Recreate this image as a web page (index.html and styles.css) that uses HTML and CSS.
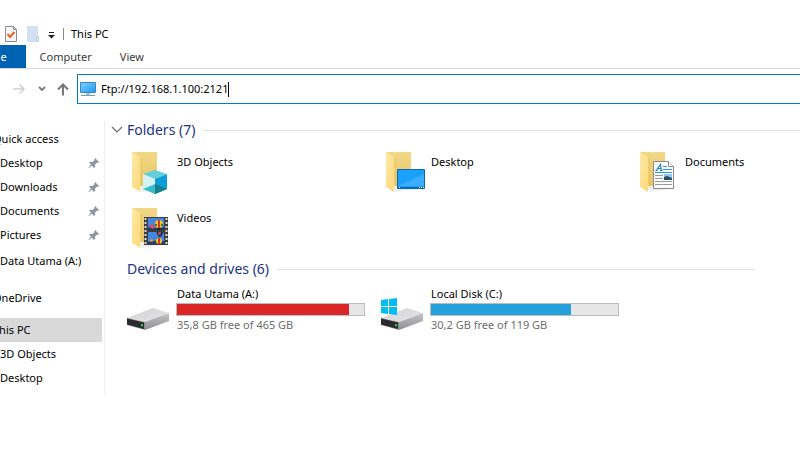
FILE: index.html
```
<!DOCTYPE html>
<html lang="en">
<head>
    <meta charset="UTF-8">
    <meta name="viewport" content="width=device-width, initial-scale=1.0">
    <title>This PC</title>
    <link rel="stylesheet" href="styles.css">
</head>
<body>
    <!-- Shared shapes -->
    <svg class="defs" aria-hidden="true">
        <defs>
            <linearGradient id="folderBack" x1="0" y1="0" x2="0" y2="1">
                <stop offset="0" stop-color="#f2d888"/>
                <stop offset="1" stop-color="#e8c562"/>
            </linearGradient>
            <linearGradient id="folderFront" x1="0" y1="0" x2="1" y2="1">
                <stop offset="0" stop-color="#ffe9a6"/>
                <stop offset="1" stop-color="#fcd978"/>
            </linearGradient>
            <linearGradient id="driveTop" x1="0" y1="0" x2="1" y2="1">
                <stop offset="0" stop-color="#d2d2d4"/>
                <stop offset="1" stop-color="#e6e6e8"/>
            </linearGradient>
            <linearGradient id="driveSide" x1="0" y1="0" x2="0" y2="1">
                <stop offset="0" stop-color="#c6c6c8"/>
                <stop offset="1" stop-color="#8e8e90"/>
            </linearGradient>
            <linearGradient id="screen" x1="0" y1="0" x2="1" y2="1">
                <stop offset="0" stop-color="#7fd0ff"/>
                <stop offset="1" stop-color="#1e9bf0"/>
            </linearGradient>
            <symbol id="folder" viewBox="0 0 48 48">
                <path d="M13 38h29l-4 3-24 3z" fill="#eeeeee"/>
                <path d="M5 4h25v34H12z" fill="url(#folderBack)"/>
                <path d="M5 4l9 6v27l-1 1v6L5 39z" fill="url(#folderFront)"/>
                <path d="M14 10v27" stroke="#e3bf5c" fill="none"/>
            </symbol>
            <symbol id="drive" viewBox="0 0 48 48">
                <path d="M0 31l26-10 16 5-24 9z" fill="url(#driveTop)"/>
                <path d="M18 35l24-9v8l-24 9z" fill="url(#driveSide)"/>
                <path d="M0 31l18 4v8L0 38z" fill="#8b8b8d"/>
                <path d="M0 31.500l17 4v6.500L0 37.500z" fill="#2b2b2d"/>
                <path d="M14 37l2 .5v2l-2-.5z" fill="#2fe04a"/>
            </symbol>
            <symbol id="pin" viewBox="0 0 12 12">
                <path d="M7 1l4 4-1 1-1-.4-2.300 2.400.3 2-1 1L3.800 8.700 1 11l-.5-.5L3 7.700 1.200 5.800l1-1 2.200.3L6.800 3 6.200 1.800z" fill="#8a97a3"/>
            </symbol>
        </defs>
    </svg>

    <div class="explorer">
        <header class="title-bar">
            <button class="tool" type="button" aria-label="Properties">
                <svg width="14" height="18" viewBox="0 0 14 18">
                    <path d="M1.500 1.500h8l3 3v12h-11z" fill="#f7f7f7" stroke="#8c8c8c"/>
                    <path d="M9.500 1.500v3h3" fill="none" stroke="#8c8c8c"/>
                    <path d="M3.500 9l2.500 3 4.500-5" fill="none" stroke="#e8622a" stroke-width="2"/>
                </svg>
            </button>
            <button class="tool" type="button" aria-label="New folder">
                <svg width="14" height="18" viewBox="0 0 14 18">
                    <path d="M1 1h11v10h1v6H1z" fill="#d3e0f1"/>
                    <path d="M10.500 11.500h2v5h-2z" fill="#e2eaf6" stroke="#bccde4"/>
                </svg>
            </button>
            <button class="tool" type="button" aria-label="Customize Quick Access Toolbar">
                <svg width="7" height="10" viewBox="0 0 7 10">
                    <path d="M1 3.500h5" stroke="#222222"/>
                    <path d="M0 6h7L3.500 9.500z" fill="#222222"/>
                </svg>
            </button>
            <h1 class="title">This PC</h1>
        </header>

        <nav class="tabs">
            <a class="tab tab-file" href="#file">File</a>
            <a class="tab" href="#computer">Computer</a>
            <a class="tab" href="#view">View</a>
        </nav>

        <div class="nav-row">
            <button class="nav-button" type="button" aria-label="Forward" disabled>
                <svg width="14" height="14" viewBox="0 0 14 14">
                    <path d="M1 7h11M7.500 2.500L12 7l-4.500 4.500" fill="none" stroke="#cfcfcf" stroke-width="1.500"/>
                </svg>
            </button>
            <button class="nav-button" type="button" aria-label="Recent locations">
                <svg width="8" height="14" viewBox="0 0 8 14">
                    <path d="M1 5l3 3 3-3" fill="none" stroke="#777777" stroke-width="1.800"/>
                </svg>
            </button>
            <button class="nav-button" type="button" aria-label="Up">
                <svg width="14" height="14" viewBox="0 0 14 14">
                    <path d="M7 13.500V2.500M2 7.500l5-5 5 5" fill="none" stroke="#777777" stroke-width="2"/>
                </svg>
            </button>
            <div class="address">
                <svg width="18" height="16" viewBox="0 0 18 16">
                    <path d="M1.500 1.500h15v10h-15z" fill="url(#screen)" stroke="#3c86b8"/>
                    <path d="M7 12h4v2H7z" fill="#9fc4d8"/>
                    <path d="M2 14.500h14" stroke="#6fa3bd"/>
                </svg>
                <input class="address-input" type="text" aria-label="Address" value="Ftp://192.168.1.100:2121" spellcheck="false">
                <span class="caret"></span>
            </div>
        </div>

        <div class="panes">
            <nav class="sidebar">
                <ul class="tree">
                    <li><a class="node root" href="#quick">Quick access</a></li>
                    <li><a class="node" href="#desktop">Desktop<svg class="pin"><use href="#pin"/></svg></a></li>
                    <li><a class="node" href="#downloads">Downloads<svg class="pin"><use href="#pin"/></svg></a></li>
                    <li><a class="node" href="#documents">Documents<svg class="pin"><use href="#pin"/></svg></a></li>
                    <li><a class="node" href="#pictures">Pictures<svg class="pin"><use href="#pin"/></svg></a></li>
                    <li class="drive-node"><a class="node" href="#a">Data Utama (A:)</a></li>
                    <li class="cloud-node"><a class="node root" href="#onedrive">OneDrive</a></li>
                    <li class="pc-node"><a class="node root active" href="#pc">This PC</a></li>
                    <li><a class="node" href="#3d">3D Objects</a></li>
                    <li><a class="node" href="#pc-desktop">Desktop</a></li>
                </ul>
            </nav>

            <main class="content">
                <section>
                    <h2 class="group">
                        <svg class="chevron" width="12" height="8" viewBox="0 0 12 8">
                            <path d="M1 1l5 5 5-5" fill="none" stroke="#6b6b6b" stroke-width="1.200"/>
                        </svg>
                        Folders (7)
                    </h2>
                    <div class="tiles">
                        <a class="tile" href="#3d">
                            <svg class="icon" viewBox="0 0 48 48">
                                <use href="#folder"/>
                                <path d="M16 26l12-4 12 4-12 5z" fill="#62cfdd"/>
                                <path d="M16 26l12 5v15l-12-5z" fill="#d5f3f5"/>
                                <path d="M28 31l12-5v15l-12 5z" fill="#0b9fd8"/>
                                <path d="M16 41l12-5v10z" fill="#3bbccb"/>
                                <path d="M28 36l12 5-12 5z" fill="#16808f"/>
                            </svg>
                            <span class="name">3D Objects</span>
                        </a>
                        <a class="tile" href="#desktop">
                            <svg class="icon" viewBox="0 0 48 48">
                                <use href="#folder"/>
                                <path d="M16.500 21.500h27v19h-27z" fill="#1ba1fb" stroke="#0a68b4"/>
                                <path d="M17 38l26-12v12z" fill="#3aaefc"/>
                                <path d="M17 39.500h26" stroke="#0a68b4"/>
                                <path d="M18 39.500h1M38 39.500h1M40 39.500h1M42 39.500h1" stroke="#ffffff"/>
                            </svg>
                            <span class="name">Desktop</span>
                        </a>
                        <a class="tile" href="#documents">
                            <svg class="icon" viewBox="0 0 48 48">
                                <use href="#folder"/>
                                <path d="M18.500 13.500h15l5 5v22h-20z" fill="#fafafa" stroke="#8a8a8a"/>
                                <path d="M33.500 13.500v5h5" fill="#ffffff" stroke="#8a8a8a"/>
                                <path d="M20.500 22.500h2M21.500 22l4-5.500.8 6M23 20.500h3.500M25 22.500h2.500" fill="none" stroke="#1585d0" stroke-width="1.200"/>
                                <path d="M28 18.500h4M28 21.500h9M20 24.500h17" stroke="#2b9be0"/>
                                <path d="M20 27.500h8M20 30.500h8M20 33.500h17M20 36.500h17" stroke="#9a9a9a"/>
                                <path d="M29 26h8v6h-8z" fill="#8fc7ee"/>
                                <path d="M29 29l3-1 5 2v2h-8z" fill="#2c4f66"/>
                            </svg>
                            <span class="name">Documents</span>
                        </a>
                        <a class="tile" href="#videos">
                            <svg class="icon" viewBox="0 0 48 48">
                                <use href="#folder"/>
                                <path d="M17 13h24v28H17z" fill="#3c3c3c"/>
                                <path d="M18.500 14v27M39.500 14v27" stroke="#d8d8d8" stroke-width="2" stroke-dasharray="2 2"/>
                                <path d="M21 14h16v12H21zM21 28h16v12H21z" fill="#4388e2"/>
                                <path d="M21 24l4-2 4 2 8-1v3H21zM21 38l5-2 5 2 6-1v3H21z" fill="#233d6b"/>
                                <path d="M22 22l3-2 4 3-4 2z" fill="#d94f6b"/>
                                <circle cx="32" cy="20" r="4" fill="#f3c51d"/>
                                <path d="M31 16h2v8h-2z" fill="#d8352a"/>
                                <path d="M28 20h2v2h-2zM34 20h2v2h-2z" fill="#2e7b35"/>
                                <path d="M30 24h4v2h-4z" fill="#2a2033"/>
                                <path d="M29 28h8l-3 5h-2z" fill="#26315e"/>
                                <path d="M31 28h3l-1 3h-1z" fill="#e0452e"/>
                                <circle cx="32" cy="37" r="3" fill="#f3c51d"/>
                                <path d="M31 34h2v6h-2z" fill="#d8352a"/>
                                <path d="M22 36l3-1 2 2-3 1z" fill="#e9a23b"/>
                            </svg>
                            <span class="name">Videos</span>
                        </a>
                    </div>
                </section>

                <section class="devices">
                    <h2 class="group">Devices and drives (6)</h2>
                    <div class="tiles">
                        <a class="tile" href="#a">
                            <svg class="icon" viewBox="0 0 48 48"><use href="#drive"/></svg>
                            <span class="drive-info">
                                <span class="drive-name" id="drive-a">Data Utama (A:)</span>
                                <progress class="usage full" aria-labelledby="drive-a" max="100" value="92"></progress>
                                <span class="space">35,8 GB free of 465 GB</span>
                            </span>
                        </a>
                        <a class="tile" href="#c">
                            <svg class="icon" viewBox="0 0 48 48">
                                <use href="#drive"/>
                                <path d="M0 13l7-1v7H0zM8 12l8-1v8H8zM0 20h7v7l-7-1zM8 20h8v8l-8-1z" fill="#00bcf2"/>
                            </svg>
                            <span class="drive-info">
                                <span class="drive-name" id="drive-c">Local Disk (C:)</span>
                                <progress class="usage" aria-labelledby="drive-c" max="100" value="75"></progress>
                                <span class="space">30,2 GB free of 119 GB</span>
                            </span>
                        </a>
                    </div>
                </section>
            </main>
        </div>
    </div>
</body>
</html>
```
FILE: styles.css
```
* {
    margin: 0;
    padding: 0;
    box-sizing: border-box;
}

body {
    font-family: 'Noto Sans', sans-serif;
    font-size: 11px;
    line-height: 16px;
    color: #000;
    background: #fff;
}

a {
    color: inherit;
    text-decoration: none;
}

button {
    display: flex;
    background: none;
    border: none;
}

ul {
    list-style: none;
}

.defs {
    display: block;
    width: 0;
    height: 0;
}

.explorer {
    padding-top: 22px;
    overflow: hidden;
}

/* Title bar */
.title-bar {
    display: flex;
    align-items: center;
    gap: 8px;
    height: 23px;
    padding-left: 4px;
}

.title {
    padding-left: 7px;
    border-left: 1px solid #8a8a8a;
    font-size: 11px;
    font-weight: 400;
    line-height: 12px;
}

/* Ribbon tabs */
.tabs {
    display: flex;
    border-bottom: 1px solid #dadada;
}

.tab {
    padding: 4px 14px;
    line-height: 15px;
    color: #3b3b3b;
}

.tab-file {
    margin-left: -30px;
    padding: 4px 19px;
    background: #0063b1;
    color: #fff;
}

/* Address row */
.nav-row {
    display: flex;
    align-items: center;
    padding-top: 5px;
    padding-left: 12px;
}

.nav-button {
    margin-right: 12px;
}

.nav-button:nth-child(2) {
    margin-right: 10px;
}

.nav-button:nth-child(3) {
    margin-right: 7px;
}

.address {
    flex: 1;
    display: flex;
    align-items: center;
    height: 30px;
    padding-left: 1px;
    border: 1px solid #0078d7;
    border-right: none;
}

.address-input {
    field-sizing: content;
    margin-left: 4px;
    border: none;
    outline: none;
    background: none;
    font: inherit;
    color: #000;
}

.caret {
    width: 1px;
    height: 15px;
    background: #000;
}

/* Panes */
.panes {
    display: flex;
    padding-top: 16px;
}

.sidebar {
    flex: none;
    width: 105px;
    padding: 7px 2px 5px 0;
    border-right: 1px solid #efefef;
    overflow: hidden;
}

/* The tree is scrolled a little to the left */
.tree {
    margin-left: -24px;
}

.node {
    display: flex;
    align-items: center;
    justify-content: space-between;
    height: 24px;
    padding-left: 24px;
    padding-right: 2px;
    white-space: nowrap;
}

.node.root {
    padding-left: 17px;
}

.node.active {
    background: #d9d9d9;
}

.pin {
    width: 12px;
    height: 12px;
}

.drive-node {
    margin-top: 2px;
}

.cloud-node {
    margin-top: 13px;
}

.pc-node {
    margin-top: 8px;
}

/* Content */
.content {
    flex: 1;
    min-width: 0;
    padding-left: 22px;
}

.group {
    position: relative;
    display: flex;
    align-items: center;
    gap: 8px;
    font-size: 14px;
    font-weight: 400;
    line-height: 20px;
    color: #1e3287;
}

.group::after {
    content: '';
    flex: 1;
    height: 1px;
    background: #e2e2e2;
}

.chevron {
    position: absolute;
    left: -16px;
    top: 6px;
}

.tiles {
    display: grid;
    grid-template-columns: repeat(auto-fill, 254px);
    margin-right: -100px;
    padding-top: 6px;
}

.tile {
    display: flex;
    gap: 1px;
    height: 56px;
    padding-top: 2px;
}

.icon {
    flex: none;
    width: 48px;
    height: 48px;
}

.name {
    padding-top: 6px;
    padding-left: 1px;
}

.devices {
    padding-top: 1px;
    padding-right: 45px;
}

.drive-info {
    display: flex;
    flex-direction: column;
    width: 189px;
}

.drive-name,
.space {
    padding-left: 1px;
}

.drive-name {
    line-height: 14px;
}

.space {
    padding-top: 1px;
    color: #6d6d6d;
}

.usage {
    appearance: none;
    width: 100%;
    height: 13px;
    margin-top: 2px;
    border: 1px solid #bcbcbc;
    background: #e6e6e6;
}

.usage::-webkit-progress-bar {
    background: #e6e6e6;
}

.usage::-webkit-progress-value {
    background: #26a0da;
}

.usage.full::-webkit-progress-value {
    background: #da2626;
}
```
